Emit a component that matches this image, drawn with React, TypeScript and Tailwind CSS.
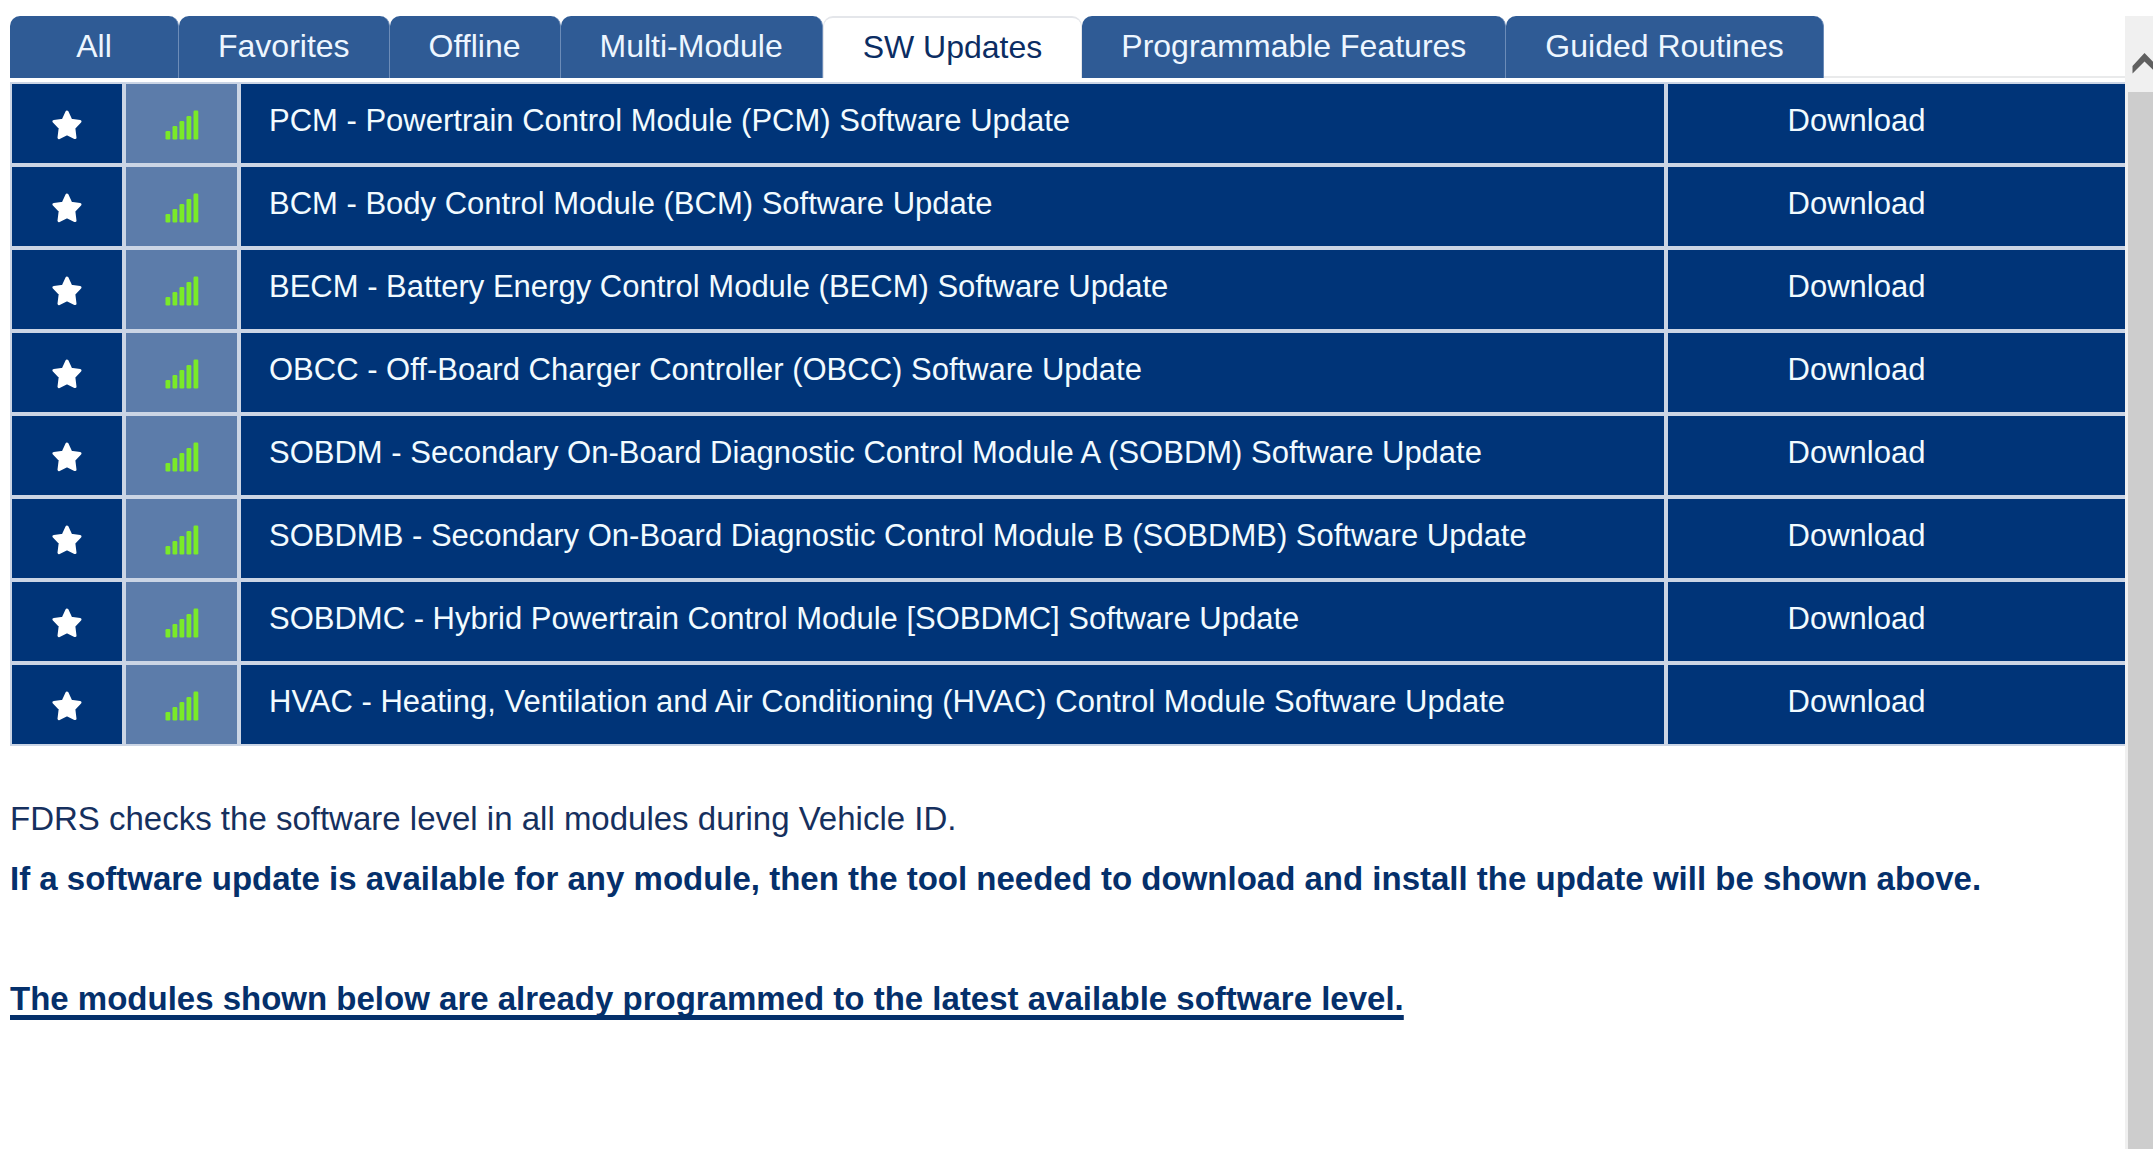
import React, { useState } from 'react';
import clsx from 'clsx';

const tabs = [
  'All',
  'Favorites',
  'Offline',
  'Multi-Module',
  'SW Updates',
  'Programmable Features',
  'Guided Routines',
];

const updates = [
  'PCM - Powertrain Control Module (PCM) Software Update',
  'BCM - Body Control Module (BCM) Software Update',
  'BECM - Battery Energy Control Module (BECM) Software Update',
  'OBCC - Off-Board Charger Controller (OBCC) Software Update',
  'SOBDM - Secondary On-Board Diagnostic Control Module A (SOBDM) Software Update',
  'SOBDMB - Secondary On-Board Diagnostic Control Module B (SOBDMB) Software Update',
  'SOBDMC - Hybrid Powertrain Control Module [SOBDMC] Software Update',
  'HVAC - Heating, Ventilation and Air Conditioning (HVAC) Control Module Software Update',
];

const StarIcon = () => (
  <svg viewBox="0 0 30 30" className="w-[30px] h-[30px]" aria-hidden="true">
    <path
      d="M15 2 L18.8 10.2 L28 11.4 L21.8 18 L23 27.6 L15 23.6 L7 27.6 L8.2 18 L2 11.4 L11.2 10.2 Z"
      fill="#ffffff"
      stroke="#ffffff"
      strokeWidth="3"
      strokeLinejoin="round"
    />
  </svg>
);

const SignalIcon = () => (
  <svg viewBox="0 0 34 30" className="w-[34px] h-[30px]" fill="#7aea28" role="img" aria-label="Online">
    <rect x="0.5" y="21" width="4.8" height="8.5" rx="1.2" />
    <rect x="7.5" y="16" width="4.8" height="13.5" rx="1.2" />
    <rect x="14.5" y="11" width="4.8" height="18.5" rx="1.2" />
    <rect x="21.5" y="6" width="4.8" height="23.5" rx="1.2" />
    <rect x="28.5" y="0.5" width="4.8" height="29" rx="1.2" />
  </svg>
);

const TabBar = () => {
  const [active, setActive] = useState('SW Updates');

  return (
    <div role="tablist" className="flex h-[62px] border-b-2 border-[#e9eaeb]">
      {tabs.map((tab) => (
        <button
          key={tab}
          type="button"
          role="tab"
          aria-selected={tab === active}
          onClick={() => setActive(tab)}
          className={clsx(
            'h-[62px] min-w-[169px] shrink-0 px-[39px] pb-0.5 rounded-t-[10px] border-r text-[32px] leading-9 whitespace-nowrap',
            tab === active
              ? 'bg-white text-[#0b2d63] border-t-2 border-l border-[#e4e6ea]'
              : 'bg-[#2f5b95] text-[#edf6ff] border-[#6c8cb8]'
          )}
        >
          {tab}
        </button>
      ))}
    </div>
  );
};

const UpdateTable = () => (
  <table className="mt-1 w-full table-fixed border-separate border-spacing-0 text-[31px] leading-9 text-[#f2fbff]">
    <colgroup>
      <col className="w-[114px]" />
      <col className="w-[115px]" />
      <col />
      <col className="w-[459px]" />
    </colgroup>
    <tbody>
      {updates.map((name) => (
        <tr key={name} className="h-[83px]">
          <td className="border-2 border-[#cbd5e5] bg-[#003478] p-0 pt-[26px] align-top">
            <button type="button" aria-label={`Favorite ${name}`} className="mx-auto block">
              <StarIcon />
            </button>
          </td>
          <td className="border-2 border-[#cbd5e5] bg-[#5c7caa] p-0 pt-[26px] align-top">
            <div className="flex justify-center">
              <SignalIcon />
            </div>
          </td>
          <td className="border-2 border-[#cbd5e5] bg-[#003478] p-0 pt-[19px] pl-7 align-top">
            {name}
          </td>
          <td className="border-2 border-r-0 border-[#cbd5e5] bg-[#003478] p-0 pt-[19px] pr-20 align-top text-center">
            <button type="button">Download</button>
          </td>
        </tr>
      ))}
    </tbody>
  </table>
);

const ScrollBar = () => (
  <div className="flex w-7 shrink-0 flex-col bg-[#f0f0f0]">
    <button type="button" aria-label="Scroll up" className="h-[76px] w-7 overflow-hidden">
      <svg viewBox="0 0 28 76" className="h-[76px] w-7" aria-hidden="true">
        <path d="M7.5 50 L19.5 37 L32 50 V57.5 L19.5 45.5 L7.5 57.5 Z" fill="#606060" />
      </svg>
    </button>
    <div className="ml-[3px] flex-1 bg-[#cdcdcd]" />
  </div>
);

export default function App() {
  return (
    <div className="flex min-h-screen bg-white pt-4 font-['Liberation_Sans',Arial,sans-serif]">
      <main className="min-w-0 flex-1 pl-[10px]">
        <TabBar />
        <UpdateTable />
        <div className="mt-[43px] text-[33px] leading-[60px] text-[#05306b]">
          <p className="text-[#16305e]">FDRS checks the software level in all modules during Vehicle ID.</p>
          <p className="font-bold">
            If a software update is available for any module, then the tool needed to download and install the update
            will be shown above.
          </p>
          <p className="mt-[60px] font-bold underline decoration-[5px] underline-offset-[5px] [text-decoration-skip-ink:none]">
            The modules shown below are already programmed to the latest available software level.
          </p>
        </div>
      </main>
      <ScrollBar />
    </div>
  );
}
